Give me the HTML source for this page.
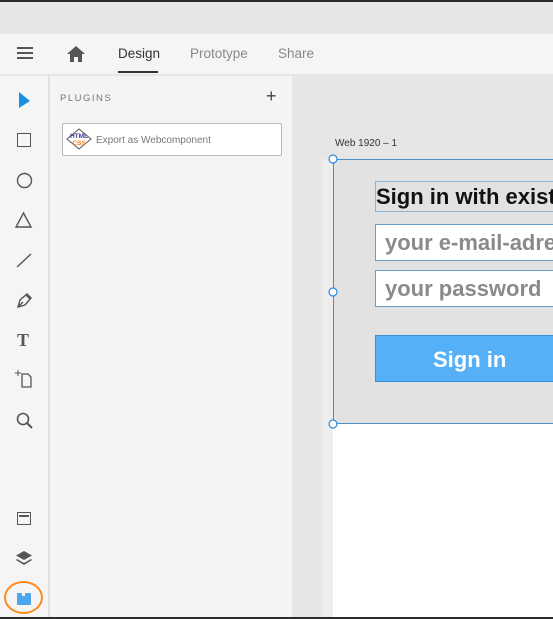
<!DOCTYPE html><html><head><style>
*{margin:0;padding:0;box-sizing:border-box}
body{width:553px;height:619px;overflow:hidden;background:#e6e6e6;font-family:"Segoe UI","Liberation Sans",sans-serif;position:relative}
.a{position:absolute}
svg{position:absolute}
</style></head><body>
<div class="a" style="left:0;top:0;width:553px;height:2px;background:#2b2b2b"></div>
<div class="a" style="left:0;top:2px;width:553px;height:32px;background:#e6e6e6"></div>
<div class="a" style="left:0;top:34px;width:553px;height:40px;background:#f5f5f5"></div>
<div class="a" style="left:17px;top:47px;width:16px;height:2px;background:#555;box-shadow:0 5px 0 #555,0 10px 0 #555"></div>
<svg style="left:66px;top:45px" width="20" height="18" viewBox="0 0 20 18"><path d="M10 1 L19 9 L16 9 L16 17 L12 17 L12 12 L8 12 L8 17 L4 17 L4 9 L1 9Z" fill="#555"/></svg>
<div class="a" style="left:118px;top:46px;font-size:13.5px;color:#333">Design</div>
<div class="a" style="left:118px;top:71px;width:40px;height:2px;background:#333"></div>
<div class="a" style="left:190px;top:46px;font-size:13.5px;color:#888">Prototype</div>
<div class="a" style="left:278px;top:46px;font-size:13.5px;color:#888">Share</div>
<div class="a" style="left:0;top:76px;width:48px;height:543px;background:#f5f5f5"></div>
<div class="a" style="left:48px;top:76px;width:2px;height:543px;background:#e0e0e0"></div>
<div class="a" style="left:50px;top:76px;width:242px;height:543px;background:#f4f4f4"></div>
<svg style="left:18px;top:92px" width="14" height="16"><path d="M1 0 L12 9 L1 16Z" fill="#1a8fe3"/></svg>
<div class="a" style="left:17px;top:133px;width:14px;height:14px;border:1.5px solid #555"></div>
<svg style="left:14px;top:170px" width="22" height="22"><circle cx="10.5" cy="10.5" r="7" fill="none" stroke="#555" stroke-width="1.4"/></svg>
<svg style="left:14px;top:210px" width="22" height="22"><path d="M9.5 3 L17 17 L2 17Z" fill="none" stroke="#555" stroke-width="1.4"/></svg>
<svg style="left:14px;top:250px" width="22" height="22"><path d="M3 17 L17 4" stroke="#555" stroke-width="1.4"/></svg>
<svg style="left:14px;top:290px" width="22" height="22"><path d="M4 17 L6 10 L13 4 L17 8 L11 15Z M4 17 L9 12 M12 5 L16 9" fill="none" stroke="#555" stroke-width="1.4"/></svg>
<div class="a" style="left:17px;top:330px;font-family:'Liberation Serif',serif;font-weight:bold;font-size:18px;color:#555">T</div>
<svg style="left:13px;top:369px" width="22" height="22"><path d="M9 5 L15 5 L18 8 L18 18 L9 18Z" fill="none" stroke="#555" stroke-width="1.3"/><path d="M2 4 L8 4 M5 1 L5 7" stroke="#555" stroke-width="1"/></svg>
<svg style="left:14px;top:410px" width="22" height="22"><circle cx="9" cy="9" r="5.5" fill="none" stroke="#555" stroke-width="1.6"/><path d="M13 13 L18 18" stroke="#555" stroke-width="2"/></svg>
<div class="a" style="left:17px;top:512px;width:14px;height:13px;border:1.5px solid #555"><div style="margin:2px 1px;height:2px;background:#555"></div></div>
<svg style="left:15px;top:550px" width="20" height="18"><path d="M9 1 L17 5.5 L9 10 L1 5.5Z" fill="#555"/><path d="M2 9 L9 13 L16 9 L17 10 L9 15 L1 10Z" fill="#555"/></svg>
<div class="a" style="left:4px;top:581px;width:39px;height:33px;border:2px solid #ff8a1f;border-radius:50%"></div>
<div class="a" style="left:17px;top:596px;width:14px;height:9px;background:#4aa6ee;border-radius:1px"></div>
<div class="a" style="left:17px;top:593px;width:5px;height:4px;background:#4aa6ee;border-radius:1px"></div>
<div class="a" style="left:25px;top:593px;width:6px;height:4px;background:#4aa6ee;border-radius:1px"></div>
<div class="a" style="left:60px;top:93px;font-size:9.5px;letter-spacing:1.5px;color:#777">PLUGINS</div>
<div class="a" style="left:266px;top:86px;font-size:18px;color:#444;font-weight:300">+</div>
<div class="a" style="left:62px;top:123px;width:220px;height:33px;border:1px solid #bbb;border-radius:2px;background:#fff"></div>
<svg style="left:66px;top:128px" width="26" height="22"><path d="M13 1 L25 11 L13 21 L1 11Z" fill="#fff" stroke="#555" stroke-width="1"/><text x="13" y="10" font-size="6.5" font-weight="bold" fill="#3a3a8a" text-anchor="middle" font-family="Liberation Sans">HTML</text><text x="13" y="17" font-size="6.5" font-weight="bold" fill="#ef7a1a" text-anchor="middle" font-family="Liberation Sans">CSS</text></svg>
<div class="a" style="left:96px;top:135px;font-size:10px;color:#777">Export as Webcomponent</div>
<div class="a" style="left:322px;top:159px;width:12px;height:460px;background:#ededed"></div>
<div class="a" style="left:335px;top:138px;font-size:10px;color:#333">Web 1920 – 1</div>
<div class="a" style="left:333px;top:159px;width:220px;height:265px;background:#e3e2e3;border:1px solid #4a90c8;border-right:none"></div>
<div class="a" style="left:333px;top:424px;width:220px;height:193px;background:#fff"></div>
<div class="a" style="left:0;top:617px;width:553px;height:2px;background:#2b2b2b"></div>
<div class="a" style="left:375px;top:181px;width:178px;height:31px;border:1px solid #8ab4d6;border-right:none;overflow:hidden;white-space:nowrap;font-weight:bold;font-size:22px;line-height:30px;color:#111">Sign in with existing</div>
<div class="a" style="left:375px;top:224px;width:178px;height:37px;background:#fff;border:1px solid #6a9cc6;border-right:none;overflow:hidden;white-space:nowrap;font-weight:bold;font-size:22px;line-height:36px;color:#8a8a8a;padding-left:9px">your e-mail-adress</div>
<div class="a" style="left:375px;top:270px;width:178px;height:37px;background:#fff;border:1px solid #6a9cc6;border-right:none;overflow:hidden;white-space:nowrap;font-weight:bold;font-size:22px;line-height:36px;color:#8a8a8a;padding-left:9px">your password</div>
<div class="a" style="left:375px;top:335px;width:178px;height:47px;background:#55b0f7;border:1px solid #3d8fd0;border-right:none;font-weight:bold;font-size:22px;line-height:47px;color:#fff;padding-left:57px">Sign in</div>
<svg style="left:327px;top:153px" width="14" height="278"><circle cx="6" cy="6" r="4" fill="#fff" stroke="#2a8ae0" stroke-width="1.2"/><circle cx="6" cy="139" r="4" fill="#fff" stroke="#2a8ae0" stroke-width="1.2"/><circle cx="6" cy="271" r="4" fill="#fff" stroke="#2a8ae0" stroke-width="1.2"/></svg>
</body></html>
